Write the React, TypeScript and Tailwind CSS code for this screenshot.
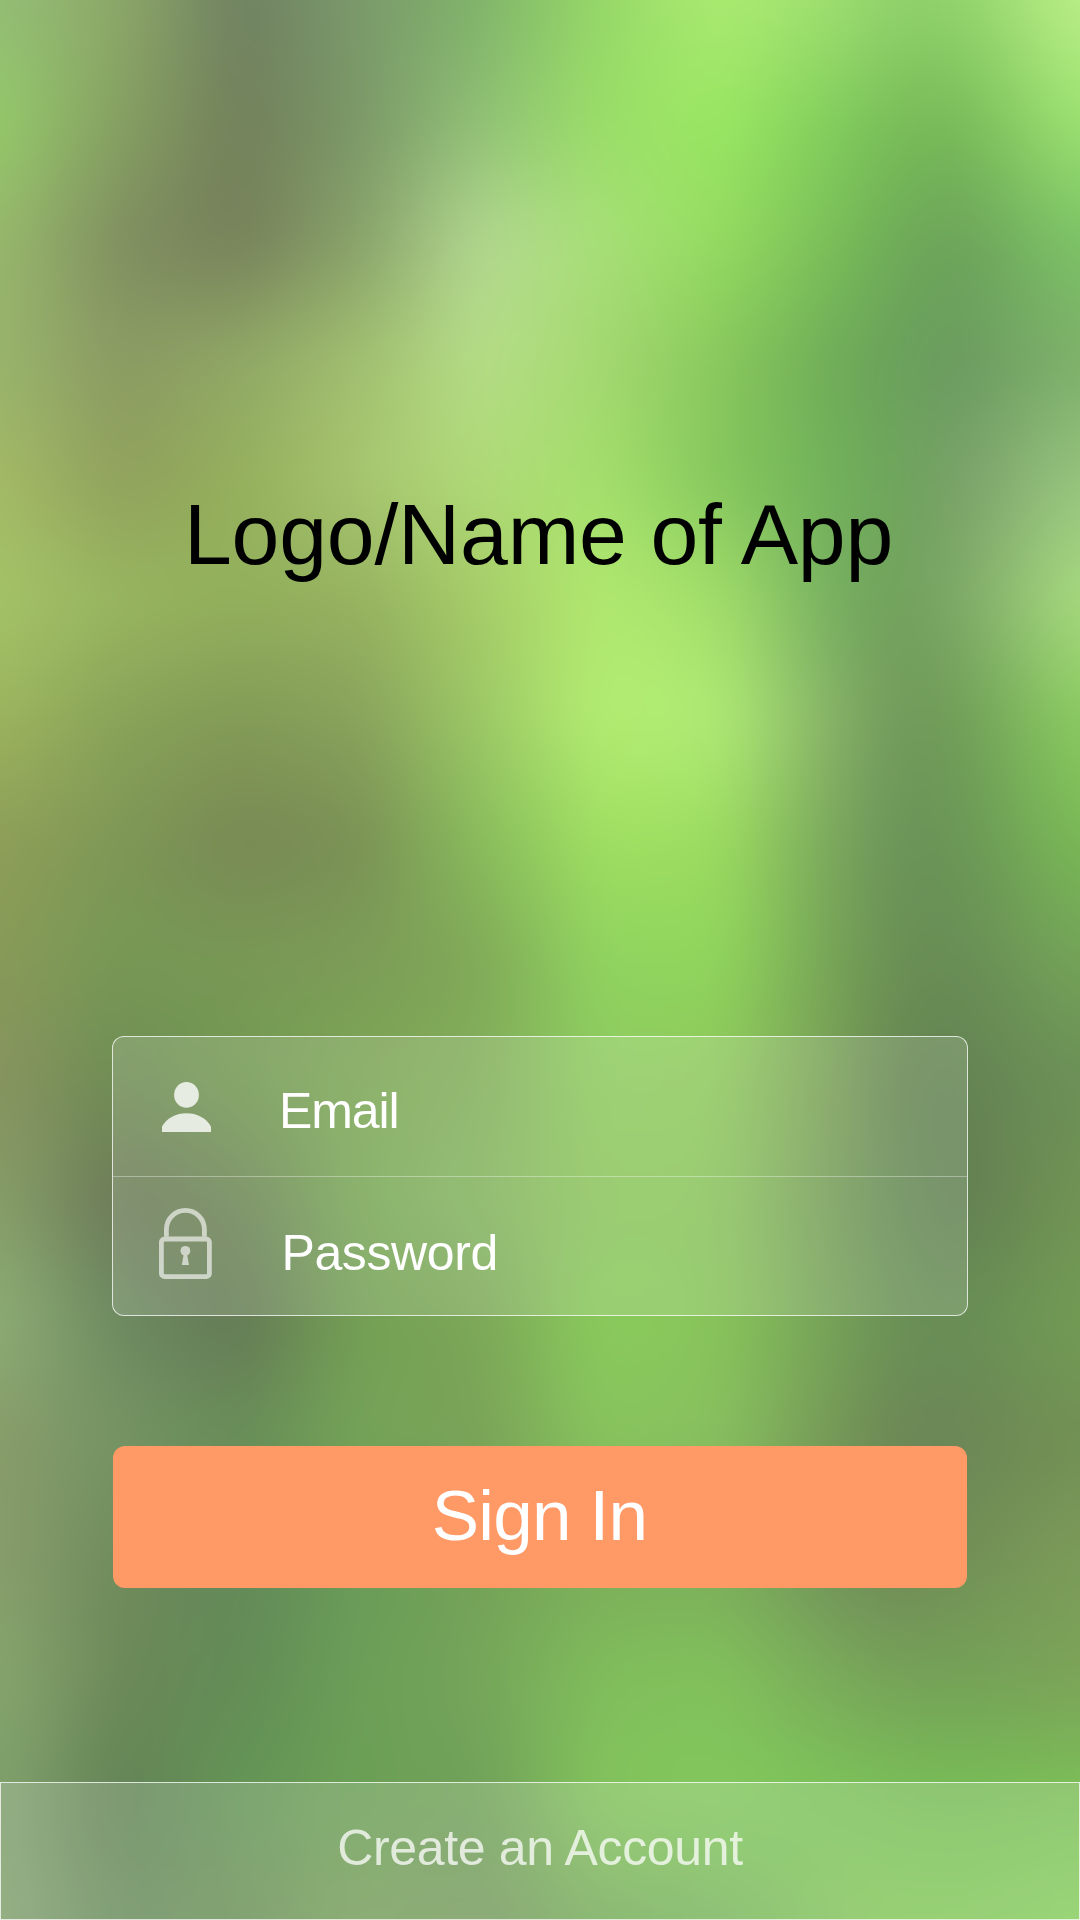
import React from "react";

/* Horizontal positions of the colour samples in each row. */
const COLUMNS = [0, 120, 240, 360, 480, 600, 720, 840, 900, 960, 1080];

/* Colours of the foliage backdrop, one row every 120px. */
const MESH: string[][] = [
  "94be76 8da868 6f8062 7b9a6c 7fb36a 96d868 acec72 9ede70 90d06c 92d46c bcf088",
  "94cb6a 86a062 727f5a 7b9868 90c076 9ade68 9ae862 80cc5c 78bc58 78ba58 9ee472",
  "98b86c 7f8e60 767f5a 88a26a b4d892 a8e078 94dc60 78bc58 6eaa58 6ca25a 7cc466",
  "98b46c 8b9a63 90a866 a2c070 b6de88 a4d870 88c85c 6eaa58 6aa05c 6a9a60 7eb06a",
  "a4ba66 90a05c 95b05c a8c670 b0da78 a4e06c 84c65c 70b05a 6ea45c 7aa06a 98c680",
  "a4c468 98b660 92b05c 96b260 a6cc68 b2ea70 a2de6a 74ac60 72a05c 7eaa68 aadc80",
  "9cb45e 88a258 829a56 88a25c 9cc866 b4ee72 b0ec76 84ae66 70985a 709e58 8acc60",
  "8e9e58 7e9756 788854 7a9055 88bc5c a0e062 9cdc60 78a45c 6a925a 6a9656 7aba56",
  "889a58 769855 799856 7c9c58 80a858 90d460 90d65c 74a056 6a8e54 688c56 74a458",
  "889460 6e8c54 729a52 7ca654 82ae5a 8ecb60 8ec85c 789c56 648452 648252 6c9058",
  "869e68 6c7858 6c8454 78a856 84b460 8cc45c 8ac45c 749858 648a54 627e52 729454",
  "8eae76 6c8a60 647856 74a054 7ca658 8acc5c 88c45a 74a058 6a9056 688e56 729c54",
  "889c6a 769464 688e58 74a458 7aa258 88c45e 88c060 749656 6c8656 6c8656 729054",
  "889e6c 708a5c 62885a 6a9c58 74a258 7cae5a 7cae5a 70905a 708858 729056 7c9c5a",
  "86a66e 6c8858 628c56 6c9f58 76a55a 80be5c 82c25c 7aaa5a 76a258 74a258 7ca458",
  "80a06c 628256 649656 6ca055 70a05a 84c45c 82c85c 7cc45a 7abf58 78be56 7cc058",
  "84a270 688c5c 6c9058 78a05c 76985e 76ac5a 78b45c 84c45c 84c85a 84c85c 88ce60",
].map((row) => row.split(" "));

function Backdrop() {
  return (
    <svg
      className="absolute inset-0 h-[1920px] w-[1080px]"
      viewBox="0 0 1080 1920"
      aria-hidden="true"
    >
      <defs>
        <filter
          id="soften"
          filterUnits="userSpaceOnUse"
          x="-120"
          y="-120"
          width="1320"
          height="2160"
          colorInterpolationFilters="sRGB"
        >
          <feGaussianBlur stdDeviation="27" />
        </filter>
        {MESH.map((row, i) => (
          <React.Fragment key={i}>
            <linearGradient id={`row${i}`} gradientUnits="userSpaceOnUse" x1="0" y1="0" x2="1080" y2="0">
              {row.map((c, j) => (
                <stop key={j} offset={COLUMNS[j] / 1080} stopColor={`#${c}`} />
              ))}
            </linearGradient>
            <linearGradient
              id={`ramp${i}`}
              gradientUnits="userSpaceOnUse"
              x1="0"
              y1={(i - 1) * 120}
              x2="0"
              y2={i * 120}
            >
              <stop offset="0" stopColor="#fff" stopOpacity="0" />
              <stop offset="1" stopColor="#fff" stopOpacity="1" />
            </linearGradient>
            <mask id={`fade${i}`} maskUnits="userSpaceOnUse" x="-120" y="-120" width="1320" height="2160">
              <rect x="-120" y="-120" width="1320" height="2160" fill={i === 0 ? "#fff" : `url(#ramp${i})`} />
            </mask>
          </React.Fragment>
        ))}
      </defs>
      <g filter="url(#soften)">
        {MESH.map((_, i) => (
          <rect
            key={i}
            x="-120"
            y={(i - 1) * 120}
            width="1320"
            height={2040 - (i - 1) * 120}
            fill={`url(#row${i})`}
            mask={`url(#fade${i})`}
          />
        ))}
      </g>
    </svg>
  );
}

function PersonIcon() {
  return (
    <svg className="h-[50px] w-[49px]" viewBox="0 0 49 50" fill="#fff" fillOpacity="0.8">
      <ellipse cx="24.5" cy="12.9" rx="12.4" ry="12.9" />
      <path d="M0 50V44.5C5 36 14 31.3 24.5 31.3S44 36 49 44.5V50Z" />
    </svg>
  );
}

function LockIcon() {
  return (
    <svg className="h-[71px] w-[53px]" viewBox="0 0 53 71" opacity="0.62">
      <g fill="none" stroke="#fff" strokeWidth="4.8">
        <path d="M7.4 28.8V21.4a19 19 0 0 1 38 0V28.8" />
        <rect x="2.4" y="31" width="48" height="37.6" rx="3.2" />
      </g>
      <circle cx="26.4" cy="42.8" r="4.9" fill="#fff" />
      <path d="M24.8 46H28L30 57H22.8Z" fill="#fff" />
    </svg>
  );
}

export default function App() {
  return (
    <main className="relative h-[1920px] w-[1080px] overflow-hidden font-['Liberation_Sans',Arial,sans-serif]">
      <Backdrop />
      <div className="relative flex h-full flex-col items-center">
        <h1 className="mt-[491px] mr-[3px] h-[86px] text-[86px] leading-none font-normal tracking-[-0.2px] whitespace-nowrap text-black">
          Logo/Name of App
        </h1>

        <form className="mt-[459px] h-[280px] w-[856px] shrink-0 rounded-xl border border-white/75 bg-white/[0.14] text-[50px] leading-none text-white">
          <div className="flex h-[140px] items-start border-b border-white/35">
            <span className="mt-[45px] ml-[49px] w-[49px] shrink-0">
              <PersonIcon />
            </span>
            <span className="mt-[49px] ml-[68px] tracking-[-1.1px]">Email</span>
          </div>
          <div className="flex h-[138px] items-start">
            <span className="mt-[31px] ml-[46px] w-[53px] shrink-0">
              <LockIcon />
            </span>
            <span className="mt-[51px] ml-[69.5px] tracking-[-0.4px]">Password</span>
          </div>
        </form>

        <button
          type="button"
          className="mt-[130px] flex h-[142px] w-[854px] shrink-0 items-start justify-center rounded-xl bg-[#ff9966] pt-[34px] pr-[1px] text-[71px] leading-none tracking-[-0.8px] text-white"
        >
          Sign In
        </button>

        <footer className="mt-auto flex h-[138px] w-full shrink-0 items-start justify-center border border-white/75 bg-white/[0.16] pt-[40px] text-[50px] leading-none tracking-[-0.35px] text-white/75">
          Create an Account
        </footer>
      </div>
    </main>
  );
}
